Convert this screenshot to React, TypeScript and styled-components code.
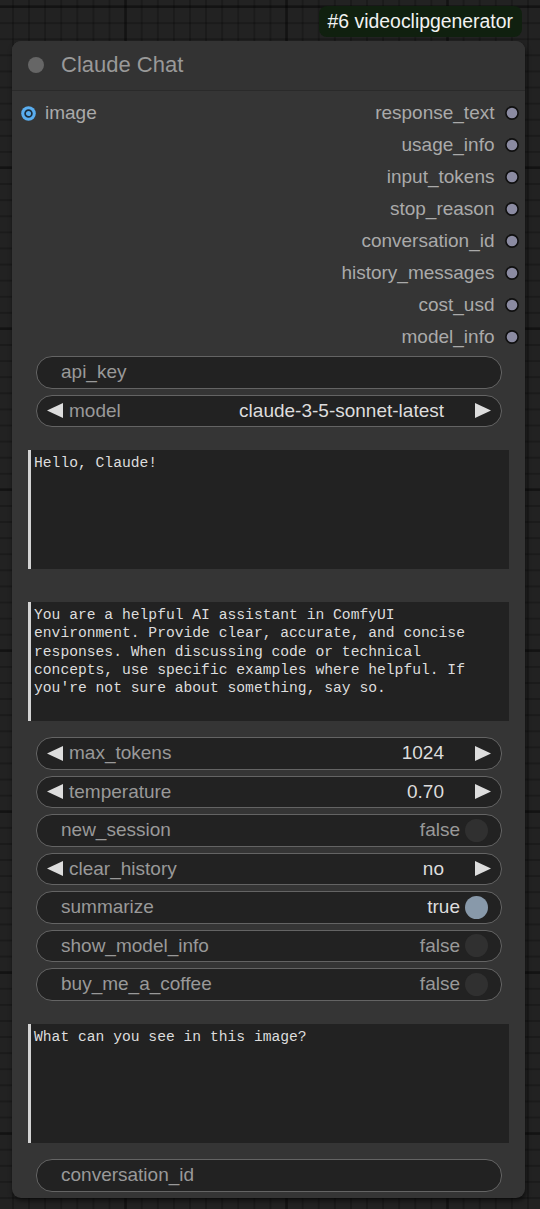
import React from 'react';
import styled, { createGlobalStyle } from 'styled-components';

const GlobalStyle = createGlobalStyle`
  html, body {
    margin: 0;
    padding: 0;
  }
  body {
    background-color: #222;
    background-image:
      linear-gradient(90deg, rgba(0, 0, 0, 0.3) 3px, transparent 3px),
      linear-gradient(0deg, rgba(0, 0, 0, 0.3) 3px, transparent 3px),
      linear-gradient(90deg, rgba(0, 0, 0, 0.22) 2px, transparent 2px),
      linear-gradient(0deg, rgba(0, 0, 0, 0.22) 2px, transparent 2px);
    background-size: 161px 161px, 161px 161px, 16.1px 16.1px, 16.1px 16.1px;
    background-position: 124px 0, 0 8px, 12px 0, 0 8px;
    font-family: "Liberation Sans", Arial, sans-serif;
  }
`;

const Canvas = styled.div`
  min-height: 1209px;
  box-sizing: border-box;
  padding: 6px 15px 0 12px;
`;

const Column = styled.div`
  width: 513px;
  display: flex;
  flex-direction: column;
`;

const TagRow = styled.div`
  display: flex;
  justify-content: flex-end;
  padding-right: 3px;
`;

const Tag = styled.div`
  height: 31px;
  line-height: 31px;
  padding: 0 9px;
  border-radius: 8px;
  background: #10200f;
  color: #f2f2f2;
  font-size: 19.4px;
`;

const Node = styled.div`
  margin-top: 4px;
  background: #353535;
  border-radius: 9px;
  box-shadow: 1px 3px 5px rgba(0, 0, 0, 0.55);
  display: flex;
  flex-direction: column;
  padding-bottom: 6.5px;
`;

const TitleBar = styled.div`
  height: 48.5px;
  display: flex;
  align-items: center;
  padding-left: 16px;
  background: #333;
  border-radius: 9px 9px 0 0;
  border-bottom: 1px solid #2a2a2a;
`;

const TitleDot = styled.div`
  width: 16px;
  height: 16px;
  border-radius: 50%;
  background: #666;
`;

const TitleText = styled.div`
  margin-left: 17px;
  color: #999;
  font-size: 22px;
`;

const SlotList = styled.div`
  padding-top: 6.5px;
  display: flex;
  flex-direction: column;
`;

const SlotRow = styled.div`
  height: 32px;
  display: flex;
  align-items: center;
  justify-content: space-between;
`;

const InputSlot = styled.div`
  display: flex;
  align-items: center;
  gap: 9px;
  padding-left: 9px;
`;

const OutputSlot = styled.div`
  margin-left: auto;
  display: flex;
  align-items: center;
  gap: 10px;
  padding-right: 6.5px;
`;

const SlotLabel = styled.span`
  color: #aaa;
  font-size: 19px;
`;

const Widget = styled.div<{ $mt: number; $arrows?: boolean }>`
  margin: ${(p) => p.$mt}px 23px 0 24px;
  height: 32.5px;
  box-sizing: border-box;
  border: 1px solid #646464;
  border-radius: 16px;
  background: #222;
  display: flex;
  align-items: center;
  padding: 0 ${(p) => (p.$arrows ? 10 : 13)}px 0 ${(p) => (p.$arrows ? 10 : 24)}px;
  font-size: 19px;
`;

const WidgetLabel = styled.span<{ $arrows?: boolean }>`
  color: #999;
  margin-left: ${(p) => (p.$arrows ? 6 : 0)}px;
  flex: 1;
`;

const WidgetValue = styled.span<{ $on?: boolean }>`
  color: ${(p) => (p.$on === false ? '#999' : '#ddd')};
`;

const ComboValue = styled(WidgetValue)`
  margin-right: 31px;
`;

const ToggleDot = styled.div<{ $on: boolean }>`
  width: 23px;
  height: 23px;
  border-radius: 50%;
  margin-left: 5px;
  background: ${(p) => (p.$on ? '#8899aa' : '#303030')};
`;

const TextBox = styled.textarea<{ $mt: number }>`
  margin: ${(p) => p.$mt}px 16px 0 16px;
  height: 119px;
  box-sizing: border-box;
  resize: none;
  overflow: hidden;
  outline: none;
  border: none;
  border-left: 3px solid #d4d4d4;
  background: #222;
  color: #ddd;
  padding: 4px 30px 4px 3px;
  font-family: "Liberation Mono", "DejaVu Sans Mono", monospace;
  font-size: 14.67px;
  line-height: 18.3px;
`;

function Arrow({ dir }: { dir: 'left' | 'right' }) {
  return (
    <svg width="16" height="15" viewBox="0 0 16 15">
      {dir === 'left' ? (
        <polygon points="0,7.5 16,0 16,15" fill="#ddd" />
      ) : (
        <polygon points="16,7.5 0,0 0,15" fill="#ddd" />
      )}
    </svg>
  );
}

function InputDot() {
  return (
    <svg width="15" height="15" viewBox="0 0 15 15">
      <circle cx="7.5" cy="7.5" r="7.3" fill="#5aaef0" />
      <circle cx="7.5" cy="7.5" r="3.4" fill="#5aaef0" stroke="#1d2e3d" strokeWidth="1.7" />
    </svg>
  );
}

function OutputDot() {
  return (
    <svg width="14" height="14" viewBox="0 0 14 14">
      <circle cx="7" cy="7" r="6.1" fill="#8b8ba2" stroke="#101010" strokeWidth="1.6" />
    </svg>
  );
}

type W =
  | { kind: 'text'; name: string }
  | { kind: 'combo'; name: string; value: string }
  | { kind: 'toggle'; name: string; on: boolean };

function WidgetRow({ w, mt }: { w: W; mt: number }) {
  if (w.kind === 'combo') {
    return (
      <Widget $mt={mt} $arrows>
        <Arrow dir="left" />
        <WidgetLabel $arrows>{w.name}</WidgetLabel>
        <ComboValue>{w.value}</ComboValue>
        <Arrow dir="right" />
      </Widget>
    );
  }
  if (w.kind === 'toggle') {
    return (
      <Widget $mt={mt}>
        <WidgetLabel>{w.name}</WidgetLabel>
        <WidgetValue $on={w.on}>{w.on ? 'true' : 'false'}</WidgetValue>
        <ToggleDot $on={w.on} />
      </Widget>
    );
  }
  return (
    <Widget $mt={mt}>
      <WidgetLabel>{w.name}</WidgetLabel>
    </Widget>
  );
}

const outputs = [
  'response_text',
  'usage_info',
  'input_tokens',
  'stop_reason',
  'conversation_id',
  'history_messages',
  'cost_usd',
  'model_info',
];

const settings: W[] = [
  { kind: 'combo', name: 'max_tokens', value: '1024' },
  { kind: 'combo', name: 'temperature', value: '0.70' },
  { kind: 'toggle', name: 'new_session', on: false },
  { kind: 'combo', name: 'clear_history', value: 'no' },
  { kind: 'toggle', name: 'summarize', on: true },
  { kind: 'toggle', name: 'show_model_info', on: false },
  { kind: 'toggle', name: 'buy_me_a_coffee', on: false },
];

const systemPrompt =
  "You are a helpful AI assistant in ComfyUI environment. Provide clear, accurate, and concise responses. When discussing code or technical concepts, use specific examples where helpful. If you're not sure about something, say so.";

export default function App() {
  return (
    <>
      <GlobalStyle />
      <Canvas>
        <Column>
          <TagRow>
            <Tag>#6 videoclipgenerator</Tag>
          </TagRow>
          <Node>
            <TitleBar>
              <TitleDot />
              <TitleText>Claude Chat</TitleText>
            </TitleBar>
            <SlotList>
              {outputs.map((name, i) => (
                <SlotRow key={name}>
                  {i === 0 && (
                    <InputSlot>
                      <InputDot />
                      <SlotLabel>image</SlotLabel>
                    </InputSlot>
                  )}
                  <OutputSlot>
                    <SlotLabel>{name}</SlotLabel>
                    <OutputDot />
                  </OutputSlot>
                </SlotRow>
              ))}
            </SlotList>
            <WidgetRow w={{ kind: 'text', name: 'api_key' }} mt={3} />
            <WidgetRow w={{ kind: 'combo', name: 'model', value: 'claude-3-5-sonnet-latest' }} mt={6} />
            <TextBox $mt={23} readOnly defaultValue="Hello, Claude!" />
            <TextBox $mt={33} readOnly defaultValue={systemPrompt} />
            {settings.map((w, i) => (
              <WidgetRow key={w.name} w={w} mt={i === 0 ? 16 : 6} />
            ))}
            <TextBox $mt={23} readOnly defaultValue="What can you see in this image?" />
            <WidgetRow w={{ kind: 'text', name: 'conversation_id' }} mt={16.5} />
          </Node>
        </Column>
      </Canvas>
    </>
  );
}
